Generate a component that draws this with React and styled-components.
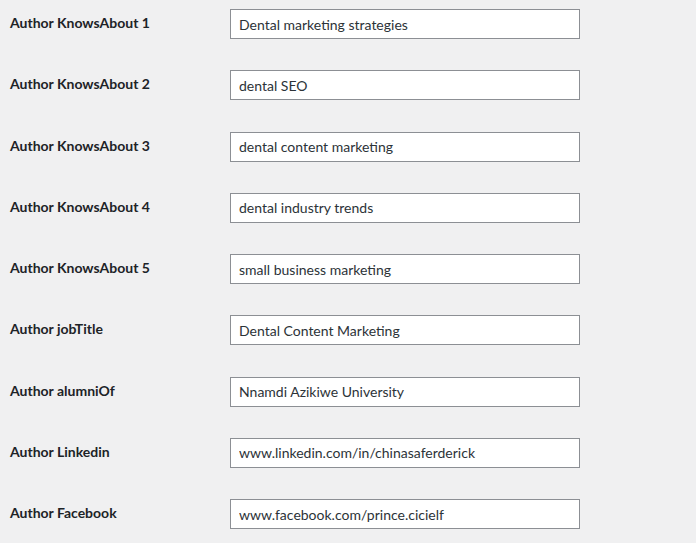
import React from "react";
import styled, { createGlobalStyle } from "styled-components";

const GlobalStyle = createGlobalStyle`
  html, body {
    margin: 0;
    padding: 0;
    background: #f0f0f1;
  }
  body {
    font-family: Lato, "Noto Sans", sans-serif;
    font-size: 14px;
    color: #1d2327;
  }
`;

const FormTable = styled.div`
  display: flex;
  flex-direction: column;
  gap: 31.25px;
  padding: 9px 0 0 10px;
`;

const Row = styled.div`
  display: flex;
  align-items: flex-start;
`;

const Label = styled.label`
  width: 220px;
  flex-shrink: 0;
  padding-top: 5px;
  font-weight: 700;
  font-size: 14px;
  line-height: 18px;
  color: #1d2327;
`;

const TextInput = styled.input`
  box-sizing: border-box;
  width: 350px;
  height: 30px;
  margin: 0;
  padding: 0 8px;
  border: 1px solid #8c8f94;
  border-radius: 0;
  background: #fff;
  font-family: inherit;
  font-size: 14px;
  color: #2c3338;
  outline: none;
`;

const fields = [
  { label: "Author KnowsAbout 1", value: "Dental marketing strategies" },
  { label: "Author KnowsAbout 2", value: "dental SEO" },
  { label: "Author KnowsAbout 3", value: "dental content marketing" },
  { label: "Author KnowsAbout 4", value: "dental industry trends" },
  { label: "Author KnowsAbout 5", value: "small business marketing" },
  { label: "Author jobTitle", value: "Dental Content Marketing" },
  { label: "Author alumniOf", value: "Nnamdi Azikiwe University" },
  { label: "Author Linkedin", value: "www.linkedin.com/in/chinasaferderick" },
  { label: "Author Facebook", value: "www.facebook.com/prince.cicielf" },
];

const App = () => (
  <>
    <GlobalStyle />
    <FormTable>
      {fields.map((f, i) => (
        <Row key={i}>
          <Label htmlFor={`field-${i}`}>{f.label}</Label>
          <TextInput id={`field-${i}`} type="text" defaultValue={f.value} />
        </Row>
      ))}
    </FormTable>
  </>
);

export default App;
